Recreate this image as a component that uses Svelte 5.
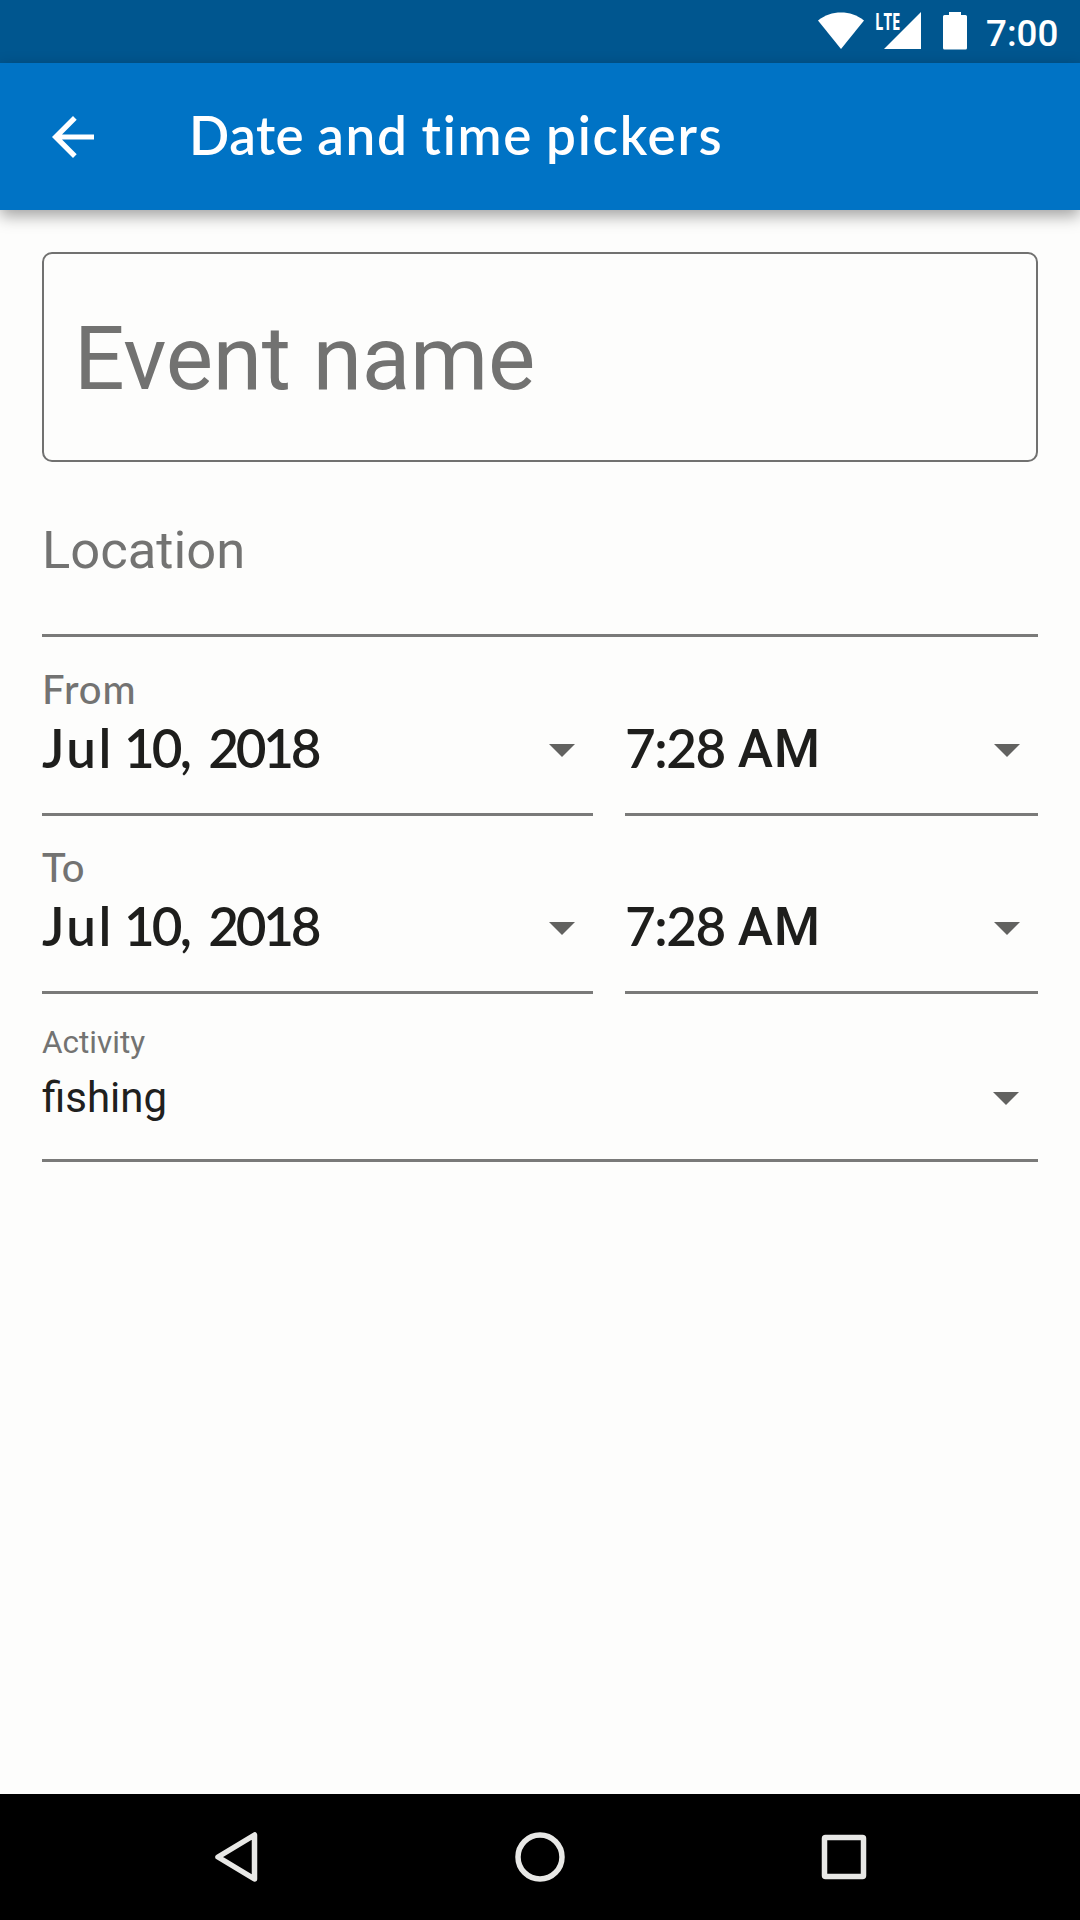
<script>
  const date = [
    { text: 'Jul', kind: 'month' },
    { text: '10,', kind: 'day' },
    { text: '2018', kind: 'year' },
  ];
  const time = [
    { text: '7:28', kind: 'hour' },
    { text: 'AM', kind: 'period' },
  ];
  const rows = [
    { label: 'From', date, time },
    { label: 'To', date, time },
  ];
</script>

{#snippet caret()}
  <svg class="caret" width="26" height="13" viewBox="0 0 26 13"><path d="M0 0h26L13 13z" /></svg>
{/snippet}

{#snippet value(words)}
  <div class="value">
    <span class="words">{#each words as w}<span class={w.kind}>{w.text}</span>{/each}</span>
    {@render caret()}
  </div>
{/snippet}

<div class="screen">
  <div class="status">
    <svg class="wifi" width="48" height="38" viewBox="0 0 48 38"><path d="M1 8.5C8 3 15.500.5 24 .5S40 3 47 8.500L24 37z" /></svg>
    <div class="signal">
      <span class="lte">LTE</span>
      <svg width="37" height="37" viewBox="0 0 37 37"><path d="M0 37H37V0z" /></svg>
    </div>
    <svg class="battery" width="24" height="38" viewBox="0 0 24 38"><path d="M6 0h12v3h4.500q1.500 0 1.500 1.500V36q0 1.500-1.500 1.500h-21Q0 37.500 0 36V4.500Q0 3 1.500 3H6z" /></svg>
    <span class="clock">7:00</span>
  </div>
  <header>
    <svg class="back" width="42" height="42" viewBox="0 0 42 42"><path d="M42 18.400H10L24.700 3.700 21 0 0 21 21 42l3.700-3.700L10 23.600H42z" /></svg>
    <h1><span class="first">Date</span><span>and</span><span>time</span><span>pickers</span></h1>
  </header>
  <main>
    <div class="event"><span>Event name</span></div>
    <div class="location">Location</div>
    {#each rows as row}
      <div class="row">
        <div class="field">
          <span class="label">{row.label}</span>
          {@render value(row.date)}
        </div>
        <div class="field">
          {@render value(row.time)}
        </div>
      </div>
    {/each}
    <div class="activity">
      <span class="hint">Activity</span>
      <div class="choice"><span>fishing</span>{@render caret()}</div>
    </div>
  </main>
  <nav>
    <svg width="50" height="52" viewBox="0 0 50 52"><path d="M7 26L43.500 4V48z" /></svg>
    <svg width="50" height="52" viewBox="0 0 50 52"><circle cx="25" cy="26" r="22" /></svg>
    <svg width="50" height="52" viewBox="0 0 50 52"><rect x="5.500" y="6.500" width="39" height="39" rx="1" /></svg>
  </nav>
</div>

<style>
  :global(body) { margin: 0; }
  .screen { width: 1080px; height: 1920px; display: flex; flex-direction: column; background: #fdfdfc; font-family: Roboto, sans-serif; overflow: hidden; }
  svg { display: block; flex: none; }
  .status { height: 63px; background: #00568f; display: flex; align-items: flex-start; justify-content: flex-end; padding-right: 21px; box-sizing: border-box; color: #fff; fill: #fff; }
  .wifi { margin: 12px 11px 0 0; }
  .signal { width: 45px; margin: 12px 22px 0 0; height: 37px; position: relative; display: flex; justify-content: flex-end; }
  .lte { position: absolute; left: -1px; top: 0; font: 700 22.500px/19px "Open Sans", sans-serif; transform: scaleX(0.66); transform-origin: left; }
  .battery { margin-top: 12px; }
  .clock { width: 73px; margin-left: 19px; font-size: 36.750px; line-height: 43px; font-weight: 500; margin-top: 12px; white-space: nowrap; }
  header { height: 147px; box-sizing: border-box; background: #0073c5; display: flex; align-items: center; padding: 0 52px; gap: 95px; fill: #fff; box-shadow: 0 6px 15px rgba(0, 0, 0, 0.36); z-index: 1; flex: none; }
  h1 { margin: -3px 0 0; color: #fff; font: 600 53px/64px Lato, sans-serif; display: flex; gap: 13px; font-variant-ligatures: none; letter-spacing: 1.700px; }
  .first { letter-spacing: 0.500px; }
  main { flex: 1; padding: 42px 42px 0; }
  .event { height: 210px; box-sizing: border-box; border: 2.600px solid #717170; border-radius: 10px; padding: 3px 0 0 30px; display: flex; align-items: center; font-size: 89.250px; letter-spacing: -0.250px; color: #727271; }
  .location { height: 175px; box-sizing: border-box; border-bottom: 3px solid #7a7a79; padding-top: 58px; font-size: 52.500px; line-height: 60px; color: #737372; }
  .row { height: 178.500px; display: grid; grid-template-columns: 551px 413px; column-gap: 32px; }
  .field { display: flex; flex-direction: column; justify-content: flex-end; border-bottom: 3px solid #7a7a79; }
  .label { font: 500 40px/48px Lato, sans-serif; letter-spacing: 1px; color: #737372; }
  .value { height: 100px; padding: 3px 18px 0 0; box-sizing: border-box; display: flex; justify-content: space-between; font: 600 53px/64px Lato, sans-serif; color: #1e1e1c; }
  .words { display: flex; }
  .month { letter-spacing: 2.500px; margin-right: 10px; }
  .day { letter-spacing: -2.800px; margin-right: 19px; }
  .year { letter-spacing: -3.200px; }
  .hour { letter-spacing: -1.500px; margin-right: 13px; }
  .period { font-family: Roboto, sans-serif; font-weight: 500; letter-spacing: 1px; margin-top: 1px; }
  .caret { fill: #626260; margin-top: 28px; }
  .activity { height: 168px; box-sizing: border-box; border-bottom: 3px solid #7a7a79; padding-top: 31px; }
  .hint { display: block; font-size: 31.500px; line-height: 36px; color: #737372; }
  .choice { display: flex; justify-content: space-between; padding: 13px 19px 0 0; font-size: 42px; line-height: 48px; color: #20201e; }
  .choice :global(.caret) { margin-top: 18px; }
  nav { height: 126px; background: #000; display: flex; justify-content: space-between; align-items: center; padding: 0 211px; box-sizing: border-box; flex: none; fill: none; stroke: #e8e8e6; stroke-width: 5.500; stroke-linejoin: round; }
</style>
